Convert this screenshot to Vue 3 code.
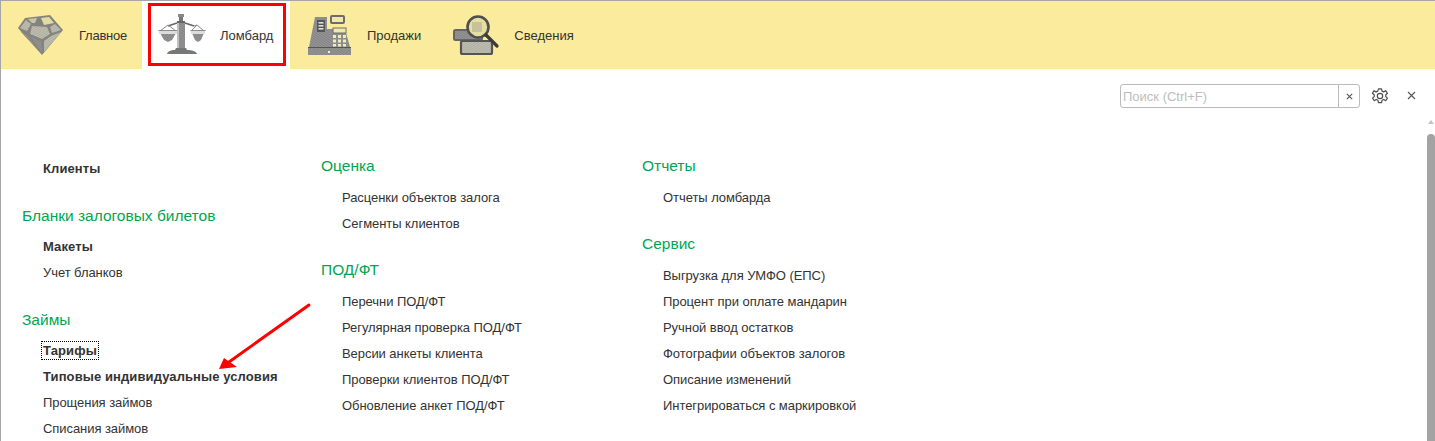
<script setup>
const columns = [
  { cls: 'col-a', sections: [
    { items: [{ t: 'Клиенты', b: true }] },
    { title: 'Бланки залоговых билетов', items: [{ t: 'Макеты', b: true }, { t: 'Учет бланков' }] },
    { title: 'Займы', items: [{ t: 'Тарифы', b: true, focus: true }, { t: 'Типовые индивидуальные условия', b: true }, { t: 'Прощения займов' }, { t: 'Списания займов' }] },
  ]},
  { cls: 'col-b', sections: [
    { title: 'Оценка', items: [{ t: 'Расценки объектов залога' }, { t: 'Сегменты клиентов' }] },
    { title: 'ПОД/ФТ', items: [{ t: 'Перечни ПОД/ФТ' }, { t: 'Регулярная проверка ПОД/ФТ' }, { t: 'Версии анкеты клиента' }, { t: 'Проверки клиентов ПОД/ФТ' }, { t: 'Обновление анкет ПОД/ФТ' }] },
  ]},
  { cls: 'col-c', sections: [
    { title: 'Отчеты', items: [{ t: 'Отчеты ломбарда' }] },
    { title: 'Сервис', items: [{ t: 'Выгрузка для УМФО (ЕПС)' }, { t: 'Процент при оплате мандарин' }, { t: 'Ручной ввод остатков' }, { t: 'Фотографии объектов залогов' }, { t: 'Описание изменений' }, { t: 'Интегрироваться с маркировкой' }] },
  ]},
]
</script>

<template>
  <div class="page">
    <nav class="tabs">
      <div class="tab tab-main">
        <svg class="icon" width="48" height="44" viewBox="0 0 48 44">
          <defs>
            <pattern id="hatch" width="2" height="2" patternUnits="userSpaceOnUse" patternTransform="rotate(35)">
              <rect width="2" height="2" fill="#979797"/><rect width="2" height="1" fill="#838383"/>
            </pattern>
            <pattern id="hatchlight" width="2" height="2" patternUnits="userSpaceOnUse" patternTransform="rotate(-35)">
              <rect width="2" height="2" fill="#c2c1b2"/><rect width="2" height="1" fill="#acaca2"/>
            </pattern>
          </defs>
          <polygon points="8,5 33,2 46,17 25,42 1,15" fill="#84847e"/>
          <polygon points="3,15 9,7 14,11 10,18" fill="url(#hatchlight)"/>
          <polygon points="11,6 20,5 18,10 15,10" fill="#c9c6a6"/>
          <polygon points="24,5 32,4 37,10 27,12" fill="#e2dba0"/>
          <polygon points="38,11 44,17 35,20 33,14" fill="url(#hatchlight)"/>
          <polygon points="15,13 30,14 33,21 25,26 13,21" fill="url(#hatchlight)"/>
          <polygon points="3,18 11,23 22,38" fill="url(#hatch)"/>
          <polygon points="14,24 24,28 25,40" fill="url(#hatch)"/>
          <polygon points="27,28 34,23 44,19 27,39" fill="url(#hatchlight)"/>
        </svg>
        <span>Главное</span>
      </div>
      <div class="tab tab-active">
        <svg class="icon" width="48" height="44" viewBox="0 0 48 44">
          <rect x="20" y="1" width="6" height="3" fill="#888"/>
          <rect x="21" y="4" width="4" height="5" fill="#777"/>
          <rect x="19" y="8" width="8" height="2" fill="#666"/>
          <path d="M10 13 L19 10 M36 13 L27 10" stroke="#666" stroke-width="1.6" fill="none"/>
          <path d="M10 12 L2 18 M10 12 L18 18 M39 12 L33 18 M39 12 L46 18 M36 13 L39 12 M10 13 L10 12" stroke="#8a8a8a" stroke-width="1" fill="none"/>
          <path d="M0 17 H20 L18 20 L14 27 L10 29 L6 27 L2 20 Z" fill="url(#hatch)"/>
          <path d="M32 17 H48 L46 20 L43 27 L40 29 L37 27 L34 20 Z" fill="url(#hatch)"/>
          <rect x="1" y="18" width="18" height="3" fill="#dcdcdc"/>
          <rect x="33" y="18" width="14" height="3" fill="#dcdcdc"/>
          <rect x="19" y="10" width="8" height="25" fill="url(#hatch)"/>
          <rect x="19" y="10" width="2" height="25" fill="#c0c0c0"/>
          <path d="M18 35 H28 L29 37 C34 37 38 38 39 41 H9 C10 38 13 37 17 37 Z" fill="#777"/>
        </svg>
        <span>Ломбард</span>
        <i class="mark"></i>
      </div>
      <div class="tab">
        <svg class="icon" width="48" height="44" viewBox="0 0 48 44">
          <rect x="25" y="3" width="13" height="7" rx="1" fill="#f1e9ac" stroke="#6c6c6c" stroke-width="2"/>
          <path d="M9 4 H21 V16 H39 L44 34 H3 Z" fill="url(#hatch)"/>
          <rect x="11" y="7" width="8" height="12" fill="#555"/>
          <rect x="12.5" y="9" width="5" height="1.6" fill="#ddd"/>
          <rect x="12.5" y="12" width="5" height="1.6" fill="#ddd"/>
          <rect x="12.5" y="15" width="5" height="1.6" fill="#ddd"/>
          <rect x="27" y="15" width="13" height="5" fill="#f1e9ac" stroke="#6c6c6c" stroke-width="1"/>
          <g fill="#f1ecc0">
            <rect x="27" y="22" width="3" height="3"/><rect x="32" y="22" width="3" height="3"/><rect x="37" y="22" width="3" height="3"/>
            <rect x="27" y="26.5" width="3" height="3"/><rect x="32" y="26.5" width="3" height="3"/><rect x="37" y="26.5" width="3" height="3"/>
            <rect x="27" y="31" width="3" height="2.5"/><rect x="32" y="31" width="3" height="2.5"/><rect x="37" y="31" width="3" height="2.5"/>
          </g>
          <rect x="2" y="34" width="43" height="8" fill="url(#hatch)"/>
          <rect x="2" y="34" width="43" height="1" fill="#555"/>
          <rect x="22" y="38" width="2" height="2" fill="#eee"/>
        </svg>
        <span>Продажи</span>
      </div>
      <div class="tab">
        <svg class="icon" width="48" height="44" viewBox="0 0 48 44">
          <rect x="1" y="17" width="28" height="10" rx="1.5" fill="url(#hatch)" stroke="#666" stroke-width="2"/>
          <rect x="8" y="28" width="31" height="13" rx="1.5" fill="url(#hatchlight)" stroke="#555" stroke-width="2.2"/>
          <circle cx="25" cy="14" r="10.5" fill="#e6dfa0" stroke="#4f4f4f" stroke-width="2.6"/>
          <rect x="19" y="9" width="10" height="10" fill="#c6c29b"/>
          <path d="M33 22 L44 33" stroke="#3c3c3c" stroke-width="3.2" stroke-linecap="round"/>
        </svg>
        <span>Сведения</span>
      </div>
    </nav>

    <div class="tools">
      <div class="search">
        <span class="placeholder">Поиск (Ctrl+F)</span>
        <button class="clear">
          <svg width="7" height="7" viewBox="0 0 7 7"><path d="M.8.8l5.4 5.4M6.2.8L.8 6.2" stroke="#555" stroke-width="1.1"/></svg>
        </button>
      </div>
      <svg class="gear" width="18" height="18" viewBox="0 0 24 24" fill="none" stroke="#4d4d4d" stroke-width="1.6" stroke-linejoin="round">
        <path d="M10 2.5h4l.7 3 2.2 1 2.7-1.6 2.3 3.4-2.2 2.1v2.4l2.2 2.1-2.3 3.4-2.7-1.6-2.2 1-.7 3h-4l-.7-3-2.2-1-2.7 1.6-2.3-3.4 2.2-2.1v-2.4L1.8 8.300l2.3-3.4 2.7 1.6 2.2-1z"/>
        <circle cx="12" cy="12" r="3.6"/>
      </svg>
      <svg class="close" width="9" height="9" viewBox="0 0 9 9"><path d="M1 1l7 7M8 1L1 8" stroke="#555" stroke-width="1.1"/></svg>
    </div>

    <main class="content">
      <div v-for="col in columns" :key="col.cls" class="col" :class="col.cls">
        <section v-for="(s, i) in col.sections" :key="i" class="section">
          <h3 v-if="s.title">{{ s.title }}</h3>
          <a v-for="item in s.items" :key="item.t" class="item" :class="{ bold: item.b }">
            <span :class="{ focus: item.focus }">{{ item.t }}</span>
          </a>
        </section>
      </div>
    </main>

    <svg class="arrow" width="100" height="70" viewBox="0 0 100 70">
      <path d="M90 2 L10 59" stroke="#ff0000" stroke-width="3" stroke-linecap="round"/>
      <polygon points="0,66 5,55 18,64" fill="#ff0000"/>
    </svg>

    <div class="scrollbar">
      <i class="up"></i>
      <i class="thumb"></i>
    </div>
  </div>
</template>

<style>
html, body { margin: 0; background: #fff; }
</style>

<style scoped>
.page {
  position: relative;
  width: 1435px;
  height: 441px;
  box-sizing: border-box;
  overflow: hidden;
  border-top: 1px solid #a6a6a6;
  border-left: 1px solid #a6a6a6;
  background: #fff;
  font-family: "Liberation Sans", Arial, sans-serif;
  font-size: 13px;
  color: #333;
}
.tabs {
  display: flex;
  height: 68px;
  background: #fbeb9c;
}
.tab {
  position: relative;
  display: flex;
  align-items: center;
  gap: 13px;
  padding: 0 16px;
}
.tab-main { gap: 14px; width: 141px; box-sizing: border-box; letter-spacing: -0.25px; }
.tab-active { gap: 14px; width: 148px; box-sizing: border-box; background: #fff; }
.tab .icon { flex: none; }
.mark {
  position: absolute;
  left: 6px;
  top: 2px;
  width: 132px;
  height: 57px;
  border: 3px solid #ff0000;
}
.tools {
  display: flex;
  align-items: center;
  justify-content: flex-end;
  height: 24px;
  margin-top: 15px;
  padding-right: 19px;
}
.search {
  display: flex;
  width: 240px;
  height: 24px;
  box-sizing: border-box;
  border: 1px solid #bcbcbc;
  border-radius: 3px;
  margin-right: 11px;
}
.placeholder {
  flex: 1;
  padding-left: 2px;
  line-height: 23px;
  color: #bdbdbd;
}
.clear {
  display: flex;
  align-items: center;
  justify-content: center;
  width: 21px;
  padding: 0;
  border: 0;
  border-left: 1px solid #bcbcbc;
  background: none;
}
.gear { margin-right: 18px; }
.close { margin-top: -1px; }
.content {
  display: flex;
  margin-top: 47px;
}
.col-a { width: 320px; padding-top: 1px; padding-left: 21px; box-sizing: border-box; }
.col-b { width: 321px; padding-top: 1px; }
.col-c { padding-top: 1px; }
.section + .section { margin-top: 24px; }
.col-b .section + .section, .col-c .section + .section { margin-top: 23px; }
h3 {
  margin: 0 0 8px;
  font-size: 15.5px;
  font-weight: 400;
  line-height: 20px;
  color: #00a651;
}
.col-b h3, .col-c h3 { margin-bottom: 9px; }
.item {
  display: block;
  height: 26px;
  line-height: 26px;
  padding-left: 21px;
  letter-spacing: -0.06px;
  white-space: nowrap;
}
.bold { font-weight: 700; letter-spacing: 0.1px; }
.focus { outline: 1px dotted #000; outline-offset: 1px; }
.arrow {
  position: absolute;
  left: 218px;
  top: 302px;
}
.scrollbar {
  position: absolute;
  right: 0;
  top: 119px;
  bottom: 0;
  width: 9px;
  display: flex;
  flex-direction: column;
  align-items: center;
}
.up {
  width: 0;
  height: 0;
  border-left: 3px solid transparent;
  border-right: 3px solid transparent;
  border-bottom: 4px solid #c4c4c4;
}
.thumb {
  flex: 1;
  width: 8px;
  margin-top: 10px;
  border-radius: 4px 4px 0 0;
  background: #a3a3a3;
}
</style>
